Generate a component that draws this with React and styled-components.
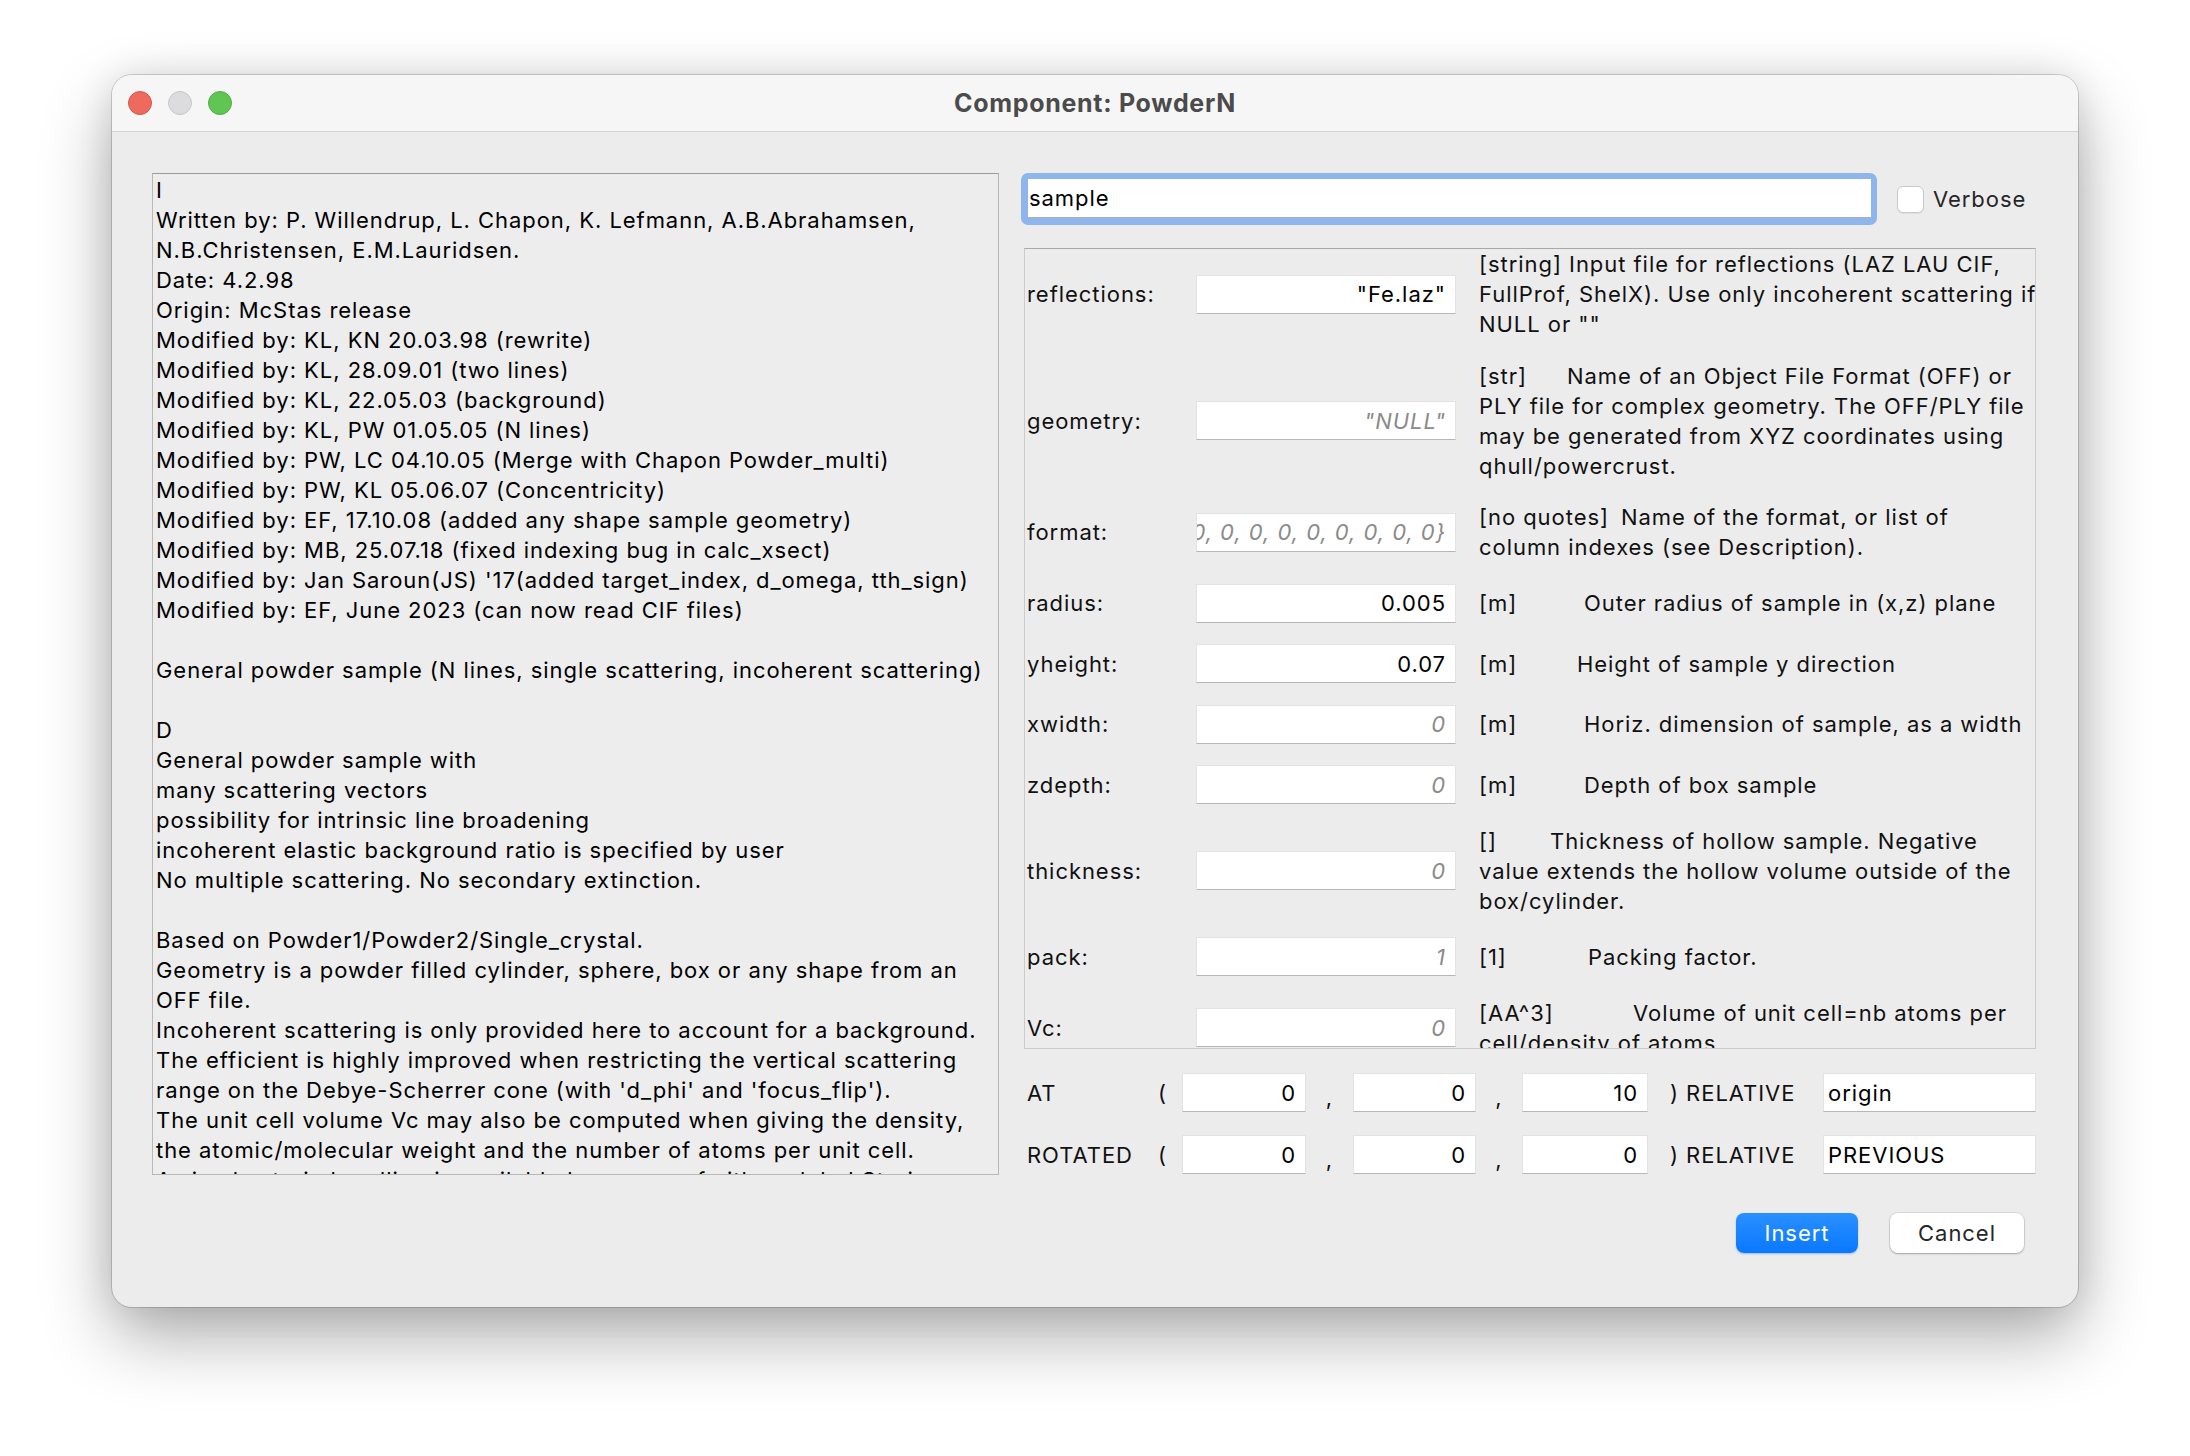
import styled, { createGlobalStyle } from "styled-components";

const GlobalStyle = createGlobalStyle`
  html, body {
    margin: 0;
    padding: 0;
    background: #ffffff;
  }
  body {
    font-family: Inter, "Liberation Sans", Arial, sans-serif;
    letter-spacing: 0.95px;
    color: #000;
  }
`;

const Page = styled.div`
  width: 2190px;
  height: 1456px;
  box-sizing: border-box;
  padding: 75px 0 0 112px;
  overflow: hidden;
`;

const Window = styled.div`
  width: 1966px;
  height: 1232px;
  border-radius: 20px;
  background: #ececec;
  box-shadow: 0 0 0 1px rgba(0, 0, 0, 0.16), 0 30px 70px rgba(0, 0, 0, 0.32),
    0 0 36px rgba(0, 0, 0, 0.1);
  overflow: hidden;
  display: flex;
  flex-direction: column;
`;

const TitleBar = styled.div`
  flex: none;
  height: 57px;
  box-sizing: border-box;
  background: #f6f6f7;
  border-bottom: 1px solid #d2d2d2;
  display: grid;
  grid-template-columns: 1fr auto 1fr;
  align-items: center;
`;

const Lights = styled.div`
  display: flex;
  gap: 16px;
  padding-left: 16px;
`;

const Light = styled.span`
  width: 24px;
  height: 24px;
  box-sizing: border-box;
  border-radius: 50%;
  background: ${(p) => p.$color};
  border: 1px solid ${(p) => p.$edge};
`;

const Title = styled.div`
  font-size: 25px;
  font-weight: 700;
  color: #4b4b4b;
  letter-spacing: 0.7px;
`;

const Body = styled.div`
  flex: 1;
  display: flex;
  gap: 22px;
  padding: 41px 42px 0 40px;
`;

const InfoText = styled.div`
  width: 847px;
  height: 1002px;
  box-sizing: border-box;
  border: 1px solid #b8b8b8;
  border-top-color: #9a9a9a;
  background: #ededed;
  padding: 1px 3px;
  font-size: 22px;
  line-height: 30px;
  white-space: pre;
  overflow: hidden;
`;

const RightCol = styled.div`
  width: 1015px;
  display: flex;
  flex-direction: column;
`;

const NameRow = styled.div`
  display: flex;
  align-items: center;
  height: 52px;
`;

const NameRing = styled.div`
  width: 856px;
  height: 52px;
  box-sizing: border-box;
  padding: 6px 6px 7px 7px;
  border-radius: 7px;
  background: #8fb6ec;
`;

const NameInput = styled.div`
  height: 100%;
  background: #fff;
  border-bottom: 1px solid #b0b0b0;
  box-sizing: border-box;
  display: flex;
  align-items: center;
  padding-left: 1px;
  font-size: 22px;
`;

const Check = styled.span`
  width: 27px;
  height: 27px;
  box-sizing: border-box;
  margin-left: 20px;
  border-radius: 6px;
  background: #fff;
  border: 1px solid #c9c9c9;
  box-shadow: 0 1px 1px rgba(0, 0, 0, 0.06);
`;

const CheckLabel = styled.span`
  margin-left: 9px;
  font-size: 22px;
  color: #262626;
`;

const Panel = styled.div`
  margin: 23px 0 0 3px;
  height: 801px;
  box-sizing: border-box;
  border: 1px solid #cbcbcb;
  border-top-color: #a9a9a9;
  overflow: hidden;
  display: grid;
  grid-template-columns: 169px 260px 1fr;
  row-gap: 21.5px;
  align-items: center;
  align-content: start;
  padding-left: 2px;
`;

const Label = styled.div`
  font-size: 22px;
  color: #111;
`;

const Field = styled.div`
  height: 39px;
  box-sizing: border-box;
  background: #fff;
  border: 1px solid #e3e3e3;
  border-bottom-color: #b6b6b6;
  display: flex;
  align-items: center;
  justify-content: ${(p) => (p.$left ? "flex-start" : "flex-end")};
  padding: ${(p) => (p.$left ? "0 4px" : "0 9px")};
  font-size: 22px;
  font-style: ${(p) => (p.$muted ? "italic" : "normal")};
  color: ${(p) => (p.$muted ? "#8a8a8a" : "#000")};
  white-space: nowrap;
  overflow: hidden;
`;

const Desc = styled.div`
  padding-left: 23px;
  font-size: 22px;
  line-height: 30px;
  color: #111;
  white-space: nowrap;
`;

const Unit = styled.span`
  display: inline-block;
  width: ${(p) => p.$w}px;
`;

const CoordGrid = styled.div`
  margin: 24px 0 0 3px;
  display: grid;
  grid-template-columns: 134px 24px 124px 47px 123px 46px 126px 175px 213px;
  row-gap: 23px;
  align-items: center;
  font-size: 22px;
  color: #111;
`;

const CoordLabel = styled.div`
  padding-left: 3px;
`;

const Comma = styled.div`
  text-align: center;
  padding-top: 8px;
`;

const Relative = styled.div`
  padding-left: 22px;
`;

const Buttons = styled.div`
  margin-top: 39px;
  padding-right: 12px;
  display: flex;
  justify-content: flex-end;
  gap: 32px;
`;

const Button = styled.div`
  width: ${(p) => p.$w}px;
  height: 40px;
  border-radius: 8px;
  display: flex;
  align-items: center;
  justify-content: center;
  font-size: 22px;
  color: ${(p) => (p.$primary ? "#fff" : "#262626")};
  background: ${(p) =>
    p.$primary ? "linear-gradient(#2a90ff, #0a78ff)" : "#ffffff"};
  box-shadow: ${(p) =>
    p.$primary
      ? "0 1px 2px rgba(0, 90, 220, 0.35)"
      : "0 0 0 1px rgba(0, 0, 0, 0.07), 0 1px 2px rgba(0, 0, 0, 0.25)"};
`;

const info = `I
Written by: P. Willendrup, L. Chapon, K. Lefmann, A.B.Abrahamsen,
N.B.Christensen, E.M.Lauridsen.
Date: 4.2.98
Origin: McStas release
Modified by: KL, KN 20.03.98 (rewrite)
Modified by: KL, 28.09.01 (two lines)
Modified by: KL, 22.05.03 (background)
Modified by: KL, PW 01.05.05 (N lines)
Modified by: PW, LC 04.10.05 (Merge with Chapon Powder_multi)
Modified by: PW, KL 05.06.07 (Concentricity)
Modified by: EF, 17.10.08 (added any shape sample geometry)
Modified by: MB, 25.07.18 (fixed indexing bug in calc_xsect)
Modified by: Jan Saroun(JS) '17(added target_index, d_omega, tth_sign)
Modified by: EF, June 2023 (can now read CIF files)

General powder sample (N lines, single scattering, incoherent scattering)

D
General powder sample with
many scattering vectors
possibility for intrinsic line broadening
incoherent elastic background ratio is specified by user
No multiple scattering. No secondary extinction.

Based on Powder1/Powder2/Single_crystal.
Geometry is a powder filled cylinder, sphere, box or any shape from an
OFF file.
Incoherent scattering is only provided here to account for a background.
The efficient is highly improved when restricting the vertical scattering
range on the Debye-Scherrer cone (with 'd_phi' and 'focus_flip').
The unit cell volume Vc may also be computed when giving the density,
the atomic/molecular weight and the number of atoms per unit cell.
A simple strain handling is available by means of either global Strain`;

const params = [
  {
    name: "reflections",
    value: '"Fe.laz"',
    lines: [
      "[string] Input file for reflections (LAZ LAU CIF,",
      "FullProf, ShelX). Use only incoherent scattering if",
      'NULL or ""',
    ],
  },
  {
    name: "geometry",
    value: '"NULL"',
    muted: true,
    unit: "[str]",
    unitW: 88,
    lines: [
      "Name of an Object File Format (OFF) or",
      "PLY file for complex geometry. The OFF/PLY file",
      "may be generated from XYZ coordinates using",
      "qhull/powercrust.",
    ],
  },
  {
    name: "format",
    value: "{0, 0, 0, 0, 0, 0, 0, 0, 0}",
    muted: true,
    unit: "[no quotes]",
    unitW: 142,
    lines: ["Name of the format, or list of", "column indexes (see Description)."],
  },
  { name: "radius", value: "0.005", unit: "[m]", unitW: 105, lines: ["Outer radius of sample in (x,z) plane"] },
  { name: "yheight", value: "0.07", unit: "[m]", unitW: 98, lines: ["Height of sample y direction"] },
  { name: "xwidth", value: "0", muted: true, unit: "[m]", unitW: 105, lines: ["Horiz. dimension of sample, as a width"] },
  { name: "zdepth", value: "0", muted: true, unit: "[m]", unitW: 105, lines: ["Depth of box sample"] },
  {
    name: "thickness",
    value: "0",
    muted: true,
    unit: "[]",
    unitW: 71,
    lines: [
      "Thickness of hollow sample. Negative",
      "value extends the hollow volume outside of the",
      "box/cylinder.",
    ],
  },
  { name: "pack", value: "1", muted: true, unit: "[1]", unitW: 109, lines: ["Packing factor."] },
  {
    name: "Vc",
    value: "0",
    muted: true,
    unit: "[AA^3]",
    unitW: 154,
    lines: ["Volume of unit cell=nb atoms per", "cell/density of atoms."],
  },
];

const coords = [
  { label: "AT", values: ["0", "0", "10"], rel: "origin" },
  { label: "ROTATED", values: ["0", "0", "0"], rel: "PREVIOUS" },
];

const App = () => {
  return (
    <Page>
      <GlobalStyle />
      <Window>
        <TitleBar>
          <Lights>
            <Light $color="#ee6a5f" $edge="#d6564c" />
            <Light $color="#dcdcde" $edge="#c6c6c8" />
            <Light $color="#61c554" $edge="#4fae43" />
          </Lights>
          <Title>Component: PowderN</Title>
          <div />
        </TitleBar>
        <Body>
          <InfoText>{info}</InfoText>
          <RightCol>
            <NameRow>
              <NameRing>
                <NameInput>sample</NameInput>
              </NameRing>
              <Check />
              <CheckLabel>Verbose</CheckLabel>
            </NameRow>
            <Panel>
              {params.map((p) => [
                <Label key={p.name + "-l"}>{p.name}:</Label>,
                <Field key={p.name + "-f"} $muted={p.muted}>
                  {p.value}
                </Field>,
                <Desc key={p.name + "-d"}>
                  {p.lines.map((line, i) => (
                    <div key={i}>
                      {i === 0 && p.unit && <Unit $w={p.unitW}>{p.unit}</Unit>}
                      {line}
                    </div>
                  ))}
                </Desc>,
              ])}
            </Panel>
            <CoordGrid>
              {coords.map((c) => [
                <CoordLabel key={c.label + "-l"}>{c.label}</CoordLabel>,
                <div key={c.label + "-p"}>(</div>,
                <Field key={c.label + "-0"}>{c.values[0]}</Field>,
                <Comma key={c.label + "-c0"}>,</Comma>,
                <Field key={c.label + "-1"}>{c.values[1]}</Field>,
                <Comma key={c.label + "-c1"}>,</Comma>,
                <Field key={c.label + "-2"}>{c.values[2]}</Field>,
                <Relative key={c.label + "-r"}>) RELATIVE</Relative>,
                <Field key={c.label + "-t"} $left>
                  {c.rel}
                </Field>,
              ])}
            </CoordGrid>
            <Buttons>
              <Button $primary $w={122}>
                Insert
              </Button>
              <Button $w={134}>Cancel</Button>
            </Buttons>
          </RightCol>
        </Body>
      </Window>
    </Page>
  );
};

export default App;
